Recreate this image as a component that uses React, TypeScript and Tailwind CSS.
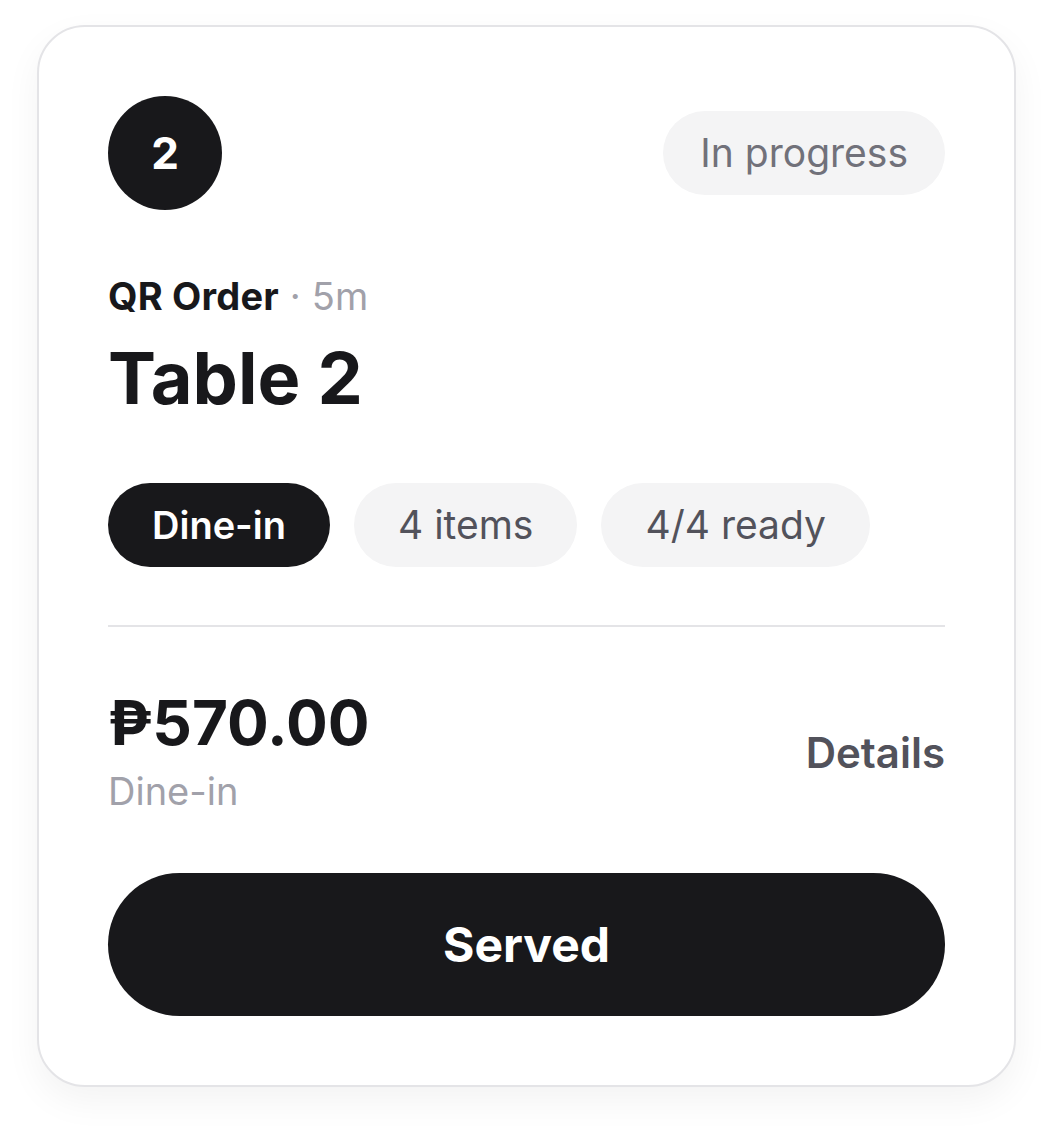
import React from 'react';

const chips = [
  { label: 'Dine-in', dark: true },
  { label: '4 items', dark: false },
  { label: '4/4 ready', dark: false },
];

export default function App() {
  return (
    <div className="min-h-screen bg-white px-[37px] pt-[25px] pb-[50px] font-['Inter',sans-serif]">
      <div className="rounded-[48px] border-2 border-[#e4e4e7] bg-white p-[69px] shadow-[0_14px_36px_rgba(0,0,0,0.05)]">
        <div className="flex items-center justify-between">
          <div className="flex h-[114px] w-[114px] items-center justify-center rounded-full bg-[#18181b] text-[44px] font-bold leading-none text-white">
            2
          </div>
          <span className="rounded-full bg-[#f4f4f5] px-[37px] py-[18px] text-[39px] leading-[48px] text-[#71717a]">
            In progress
          </span>
        </div>

        <div className="mt-[63px] text-[38px] leading-[46px] tracking-[0.005em]">
          <span className="font-bold text-[#18181b]">QR Order</span>
          <span className="text-[#a1a1aa]"> · 5m</span>
        </div>
        <h2 className="mt-[23px] text-[72px] font-bold leading-none text-[#18181b]">
          Table 2
        </h2>

        <div className="mt-[69px] flex gap-[24px]">
          {chips.map((c) => (
            <span
              key={c.label}
              className={
                c.dark
                  ? 'rounded-full bg-[#18181b] px-[44px] py-[18px] text-[38px] font-semibold leading-[48px] text-white'
                  : 'rounded-full bg-[#f4f4f5] px-[44px] py-[18px] text-[39px] leading-[48px] text-[#52525b]'
              }
            >
              {c.label}
            </span>
          ))}
        </div>

        <div className="mt-[58px] h-[2px] bg-[#e4e4e7]" />

        <div className="mt-[65px] flex items-center justify-between">
          <div>
            <div className="text-[62px] font-bold leading-none text-[#18181b]">₱570.00</div>
            <div className="mt-[14px] text-[38px] leading-[46px] text-[#a1a1aa]">Dine-in</div>
          </div>
          <button className="text-[42px] font-semibold leading-none text-[#52525b]">Details</button>
        </div>

        <button className="mt-[59px] flex h-[143px] w-full items-center justify-center rounded-full bg-[#18181b] text-[48px] font-bold text-white">
          Served
        </button>
      </div>
    </div>
  );
}
